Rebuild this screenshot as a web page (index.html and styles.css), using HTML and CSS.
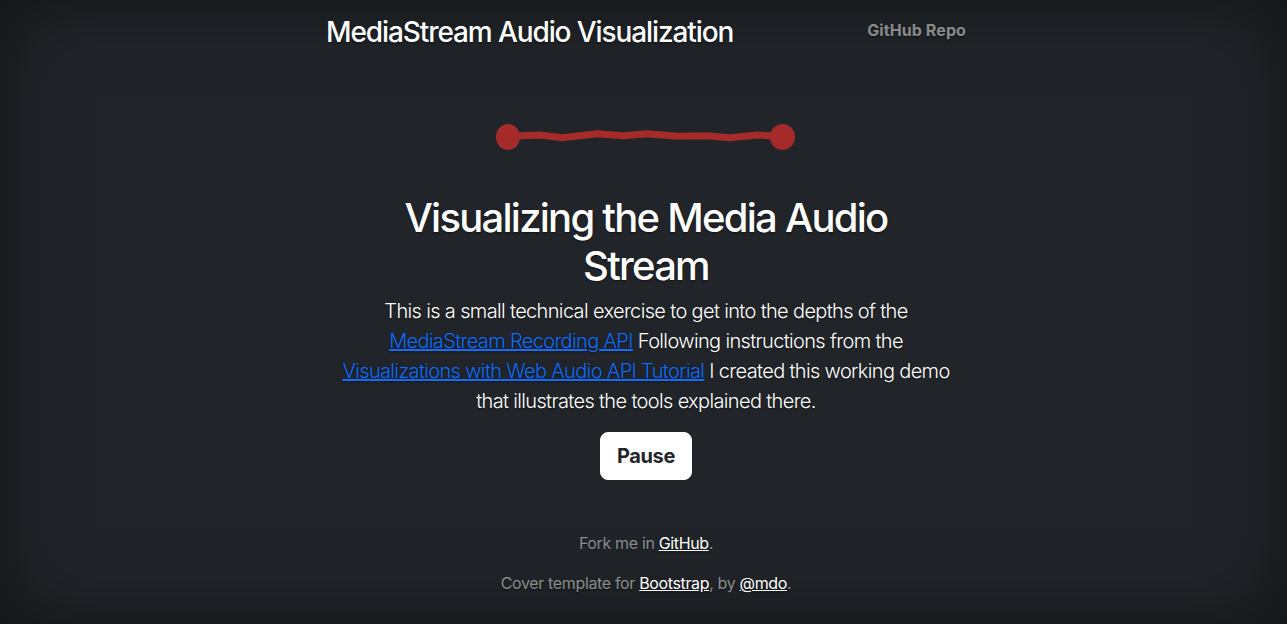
FILE: index.html
```html
<!DOCTYPE html>
<html lang="en">
<head>
<meta charset="utf-8">
<title>MediaStream Audio Visualization</title>
<link rel="stylesheet" href="styles.css">
</head>
<body>
<div class="cover">
  <header class="masthead">
    <h3 class="brand">MediaStream Audio Visualization</h3>
    <nav class="nav">
      <a class="nav-link" href="#">GitHub Repo</a>
    </nav>
  </header>
  <main class="main">
    <svg class="wave" width="300" height="30" viewBox="0 0 300 30" aria-hidden="true">
      <polyline points="12,15.5 24,14.7 44,14 67,16.7 101,12.7 127,14.7 151,12.7 181,15.3 211,14.7 234,16.7 261,14 274,14.7 287,15.5" fill="none" stroke="#a52a2a" stroke-width="7" stroke-linejoin="round" stroke-linecap="round"/>
      <ellipse cx="12" cy="16" rx="12" ry="13" fill="#a52a2a"/>
      <ellipse cx="286.5" cy="16" rx="12.5" ry="13" fill="#a52a2a"/>
    </svg>
    <h1 class="title">Visualizing the Media Audio Stream</h1>
    <p class="lead">This is a small technical exercise to get into the depths of the <a href="#">MediaStream Recording API</a> Following instructions from the <a href="#">Visualizations with Web Audio API Tutorial</a> I created this working demo that illustrates the tools explained there.</p>
    <div class="actions">
      <a href="#" class="btn">Pause</a>
    </div>
  </main>
  <footer class="footer">
    <p>Fork me in <a href="#">GitHub</a>.</p>
    <p>Cover template for <a href="#">Bootstrap</a>, by <a href="#">@mdo</a>.</p>
  </footer>
</div>
</body>
</html>
```

FILE: styles.css
```css
html, body {
  height: 100%;
}
body {
  margin: 0;
  padding-left: 5px;
  box-sizing: border-box;
  background-color: #212529;
  box-shadow: inset 0 0 5rem rgba(0, 0, 0, .5);
  color: #fff;
  font-family: Inter, "Noto Sans", sans-serif;
  font-size: 16px;
  line-height: 1.5;
  text-shadow: 0 .05rem .1rem rgba(0, 0, 0, .5);
  overflow: hidden;
}
.cover {
  max-width: 672px;
  margin: 0 auto;
  padding: 16px;
  box-sizing: border-box;
  display: flex;
  flex-direction: column;
}
.masthead {
  display: flex;
  justify-content: space-between;
  align-items: flex-start;
}
.brand {
  margin: 0;
  font-size: 28px;
  font-weight: 500;
  line-height: 1.2;
  padding-left: 0;
  letter-spacing: -1.1px;
}
.nav {
  display: flex;
}
.nav-link {
  padding: 2px 0;
  color: rgba(255, 255, 255, .5);
  font-weight: 700;
  text-decoration: none;
  letter-spacing: 0.1px;
}
.main {
  padding: 0 16px;
  text-align: center;
  display: flex;
  flex-direction: column;
  align-items: center;
}
.wave {
  display: block;
  margin-top: 71px;
}
.title {
  margin: 43px 0 6px;
  font-size: 40px;
  font-weight: 500;
  line-height: 1.2;
  letter-spacing: -1.75px;
}
.lead {
  margin: 0 0 16px;
  font-size: 20px;
  font-weight: 300;
  line-height: 1.5;
  letter-spacing: -0.65px;
}
.lead a {
  color: #0d6efd;
  text-decoration: underline;
}
.actions {
  display: flex;
  justify-content: center;
}
.btn {
  display: inline-block;
  padding: 8px 16px;
  font-size: 20px;
  font-weight: 700;
  line-height: 1.5;
  color: #212529;
  background: #fff;
  border: 1px solid #fff;
  border-radius: 8px;
  text-decoration: none;
  text-shadow: none;
  letter-spacing: -0.4px;
}
.footer {
  margin-top: 51px;
  text-align: center;
  color: rgba(255, 255, 255, .5);
}
.footer p {
  margin: 0 0 16px;
  letter-spacing: -0.35px;
}
.footer a {
  color: #fff;
  text-decoration: underline;
}
```
